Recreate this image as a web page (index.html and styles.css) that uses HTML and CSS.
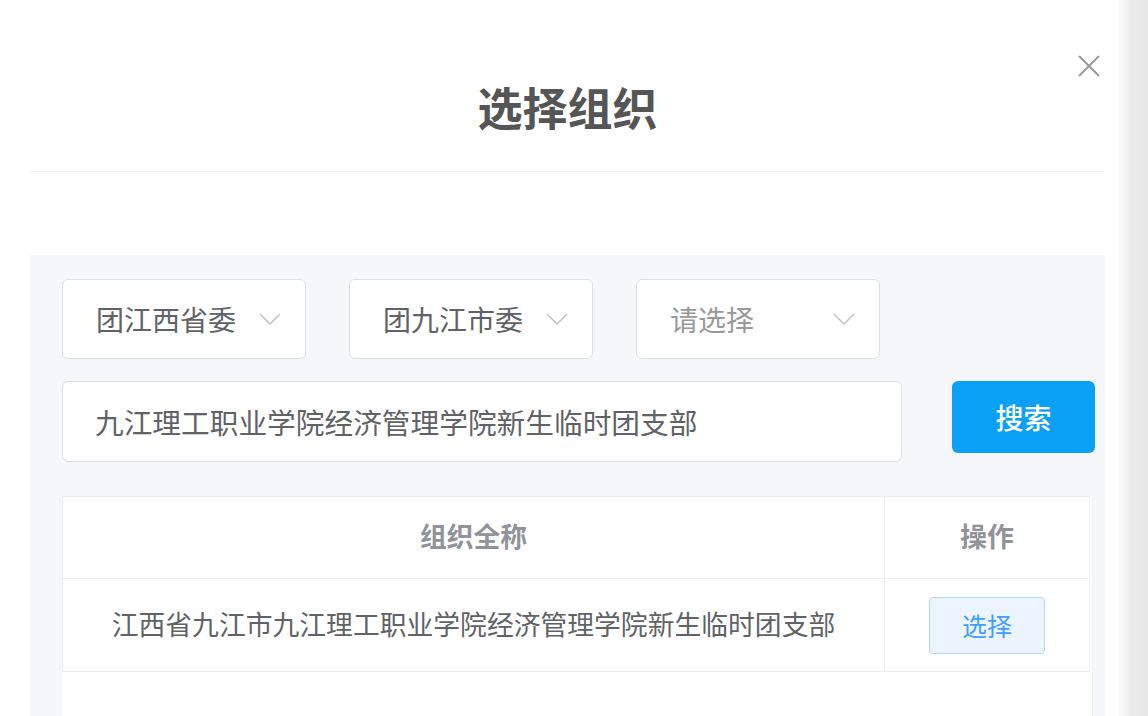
FILE: index.html
```html
<!DOCTYPE html>
<html lang="zh-CN">
<head>
    <meta charset="UTF-8">
    <meta name="viewport" content="width=device-width, initial-scale=1.0">
    <title>选择组织</title>
    <link rel="stylesheet" href="styles.css">
</head>
<body>
    <div class="page">
        <div class="dialog">
            <div class="dialog-header">
                <h2>选择组织</h2>
                <span class="close">
                    <svg width="24" height="24" viewBox="0 0 24 24">
                        <path d="M2 2 L22 22 M22 2 L2 22" stroke="#9a9a9a" stroke-width="2" fill="none"/>
                    </svg>
                </span>
            </div>
            <div class="panel">
                <div class="select-row">
                    <div class="select">
                        <span>团江西省委</span>
                        <svg class="arrow" width="22" height="12" viewBox="0 0 22 12"><path d="M1 1 L11 11 L21 1" stroke="#c0c4cc" stroke-width="1.6" fill="none"/></svg>
                    </div>
                    <div class="select">
                        <span>团九江市委</span>
                        <svg class="arrow" width="22" height="12" viewBox="0 0 22 12"><path d="M1 1 L11 11 L21 1" stroke="#c0c4cc" stroke-width="1.6" fill="none"/></svg>
                    </div>
                    <div class="select placeholder">
                        <span>请选择</span>
                        <svg class="arrow" width="22" height="12" viewBox="0 0 22 12"><path d="M1 1 L11 11 L21 1" stroke="#c0c4cc" stroke-width="1.6" fill="none"/></svg>
                    </div>
                </div>
                <div class="search-row">
                    <div class="search-input">九江理工职业学院经济管理学院新生临时团支部</div>
                    <button class="search-btn">搜索</button>
                </div>
                <div class="table-wrap">
                    <table>
                        <thead>
                            <tr>
                                <th class="col-name">组织全称</th>
                                <th class="col-op">操作</th>
                            </tr>
                        </thead>
                        <tbody>
                            <tr>
                                <td>江西省九江市九江理工职业学院经济管理学院新生临时团支部</td>
                                <td><button class="pick-btn">选择</button></td>
                            </tr>
                        </tbody>
                    </table>
                </div>
            </div>
        </div>
        <div class="side"></div>
    </div>
</body>
</html>
```

FILE: styles.css
```css
body {
    margin: 0;
    font-family: "Noto Sans CJK SC", "Noto Sans", sans-serif;
    background: #fff;
    overflow: hidden;
}
.page {
    display: flex;
    height: 716px;
}
.dialog {
    width: 1075px;
    padding: 0 13px 0 30px;
    background: #fff;
}
.dialog-header {
    position: relative;
    height: 171px;
    border-bottom: 1px solid #eeeeee;
    display: flex;
    align-items: center;
    justify-content: center;
}
.dialog-header h2 {
    margin: 0;
    padding-top: 42px;
    font-size: 45px;
    font-weight: bold;
    color: #555;
}
.close {
    position: absolute;
    right: 4px;
    top: 54px;
    line-height: 0;
}
.panel {
    margin-top: 83px;
    background: #f5f7fa;
    padding: 24px 10px 0 32px;
    height: 437px;
}
.select-row {
    display: flex;
    gap: 43px;
}
.select {
    width: 244px;
    height: 80px;
    box-sizing: border-box;
    background: #fff;
    border: 1px solid #dcdfe6;
    border-radius: 6px;
    display: flex;
    align-items: center;
    justify-content: space-between;
    padding: 0 24px 0 33px;
    font-size: 28px;
    color: #606266;
}
.select.placeholder {
    color: #999;
}
.arrow {
    display: block;
}
.search-row {
    display: flex;
    align-items: flex-start;
    gap: 50px;
    margin-top: 22px;
}
.search-input {
    width: 840px;
    height: 81px;
    box-sizing: border-box;
    background: #fff;
    border: 1px solid #dcdfe6;
    border-radius: 6px;
    padding-left: 32px;
    display: flex;
    align-items: center;
    font-size: 28.7px;
    color: #606266;
}
.search-btn {
    width: 143px;
    height: 72px;
    border: none;
    border-radius: 6px;
    background: #0aa0f6;
    color: #fff;
    font-family: inherit;
    font-size: 28px;
    font-weight: 500;
}
.table-wrap {
    margin-top: 34px;
    width: 1031px;
    height: 220px;
    background: #fff;
    border-right: 1px solid #ebeef5;
    box-sizing: border-box;
}
table {
    width: 1028px;
    border-collapse: collapse;
}
th, td {
    border: 1px solid #ebeef5;
    text-align: center;
    font-size: 26.8px;
    padding: 0 0 4px;
}
th {
    height: 77px;
    color: #909399;
    font-weight: bold;
}
td {
    height: 88px;
    color: #606266;
}
.col-op {
    width: 204px;
}
.pick-btn {
    width: 116px;
    height: 57px;
    margin-top: 4px;
    background: #ecf5ff;
    border: 1px solid #b3d8ff;
    border-radius: 4px;
    color: #409eff;
    font-family: inherit;
    font-size: 25px;
}
.side {
    flex: 1;
    background: linear-gradient(to right, #fcfcfc, #ececec 40%, #e6e6e6);
}
```
